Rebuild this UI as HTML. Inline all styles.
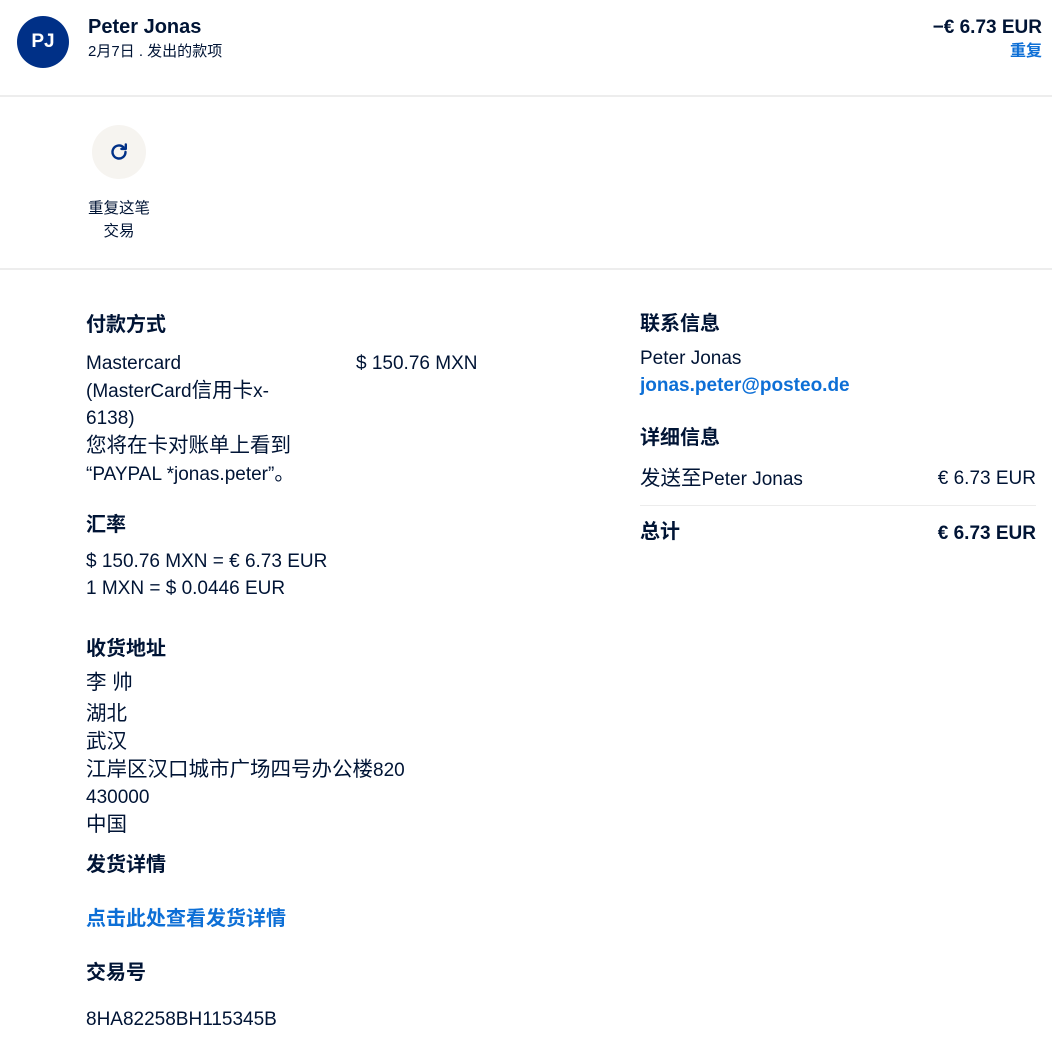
<!DOCTYPE html>
<html><head><meta charset="utf-8">
<style>
*{margin:0;padding:0;box-sizing:border-box}
body{width:1052px;height:1045px;background:#fff;position:relative;overflow:hidden;font-family:"Liberation Sans","Noto Sans CJK SC",sans-serif;color:#001435}
.a{position:absolute;white-space:nowrap;font-size:18px;line-height:27px}
.b{font-weight:bold}
.h{font-size:20px;font-weight:bold}
.c{font-size:20.5px}
.r{text-align:right}
.blue{color:#0d6fd6}
.hr{position:absolute;left:0;width:1052px;height:2px;background:#ededed}
</style></head><body>
<div style="position:absolute;left:17px;top:16px;width:52px;height:52px;border-radius:50%;background:#003087;color:#fff;font-weight:bold;font-size:19px;line-height:52px;text-align:center">PJ</div>
<div class="a b" style="left:88px;top:14px;font-size:20px">Peter Jonas</div>
<div class="a" style="left:88px;top:40px;font-size:15px;line-height:24px">2月7日 . 发出的款项</div>
<div class="a b r" style="right:10px;top:14px;font-size:19px">−€ 6.73 EUR</div>
<div class="a b r blue" style="right:10px;top:40px;font-size:16px;line-height:24px">重复</div>
<div class="hr" style="top:95px"></div>
<div style="position:absolute;left:92px;top:125px;width:54px;height:54px;border-radius:50%;background:#f6f4f0"></div>
<svg style="position:absolute;left:107px;top:140px" width="24" height="24" viewBox="0 0 24 24"><path d="M18.5 12a6.5 6.5 0 1 1-2-4.7" fill="none" stroke="#003087" stroke-width="2.4" stroke-linecap="round"/><path d="M18.8 4.5v4.4h-4.4" fill="none" stroke="#003087" stroke-width="2.4" stroke-linecap="round" stroke-linejoin="round"/></svg>
<div class="a" style="left:69px;width:100px;text-align:center;top:197px;font-size:15.5px;line-height:23px">重复这笔<br>交易</div>
<div class="hr" style="top:268px"></div>

<div class="a h" style="left:86px;top:312px">付款方式</div>
<div class="a" style="left:86px;top:350px;font-size:19px">Mastercard<br>(MasterCard<span class="c">信用卡</span>x-<br>6138)<br><span class="c">您将在卡对账单上看到</span><br>“PAYPAL *jonas.peter”<span class="c">。</span></div>
<div class="a" style="left:356px;top:350px;font-size:19px">$ 150.76 MXN</div>

<div class="a h" style="left:86px;top:512px">汇率</div>
<div class="a" style="left:86px;top:548px;font-size:19px">$ 150.76 MXN = € 6.73 EUR<br>1 MXN = $ 0.0446 EUR</div>

<div class="a h" style="left:86px;top:636px">收货地址</div>
<div class="a" style="left:86px;top:669px;font-size:19px"><span class="c">李 帅</span></div>
<div class="a" style="left:86px;top:700px;font-size:19px"><span class="c">湖北</span><br><span class="c">武汉</span><br><span class="c">江岸区汉口城市广场四号办公楼</span>820<br>430000<br><span class="c">中国</span></div>

<div class="a h" style="left:86px;top:852px">发货详情</div>
<div class="a b blue" style="left:86px;top:906px;font-size:20px">点击此处查看发货详情</div>
<div class="a h" style="left:86px;top:960px">交易号</div>
<div class="a" style="left:86px;top:1006px;font-size:19px">8HA82258BH115345B</div>

<div class="a h" style="left:640px;top:311px">联系信息</div>
<div class="a" style="left:640px;top:345px;font-size:19px">Peter Jonas</div>
<div class="a b blue" style="left:640px;top:372px;font-size:19px">jonas.peter@posteo.de</div>
<div class="a h" style="left:640px;top:425px">详细信息</div>
<div class="a" style="left:640px;top:465px;font-size:19px"><span class="c">发送至</span>Peter Jonas</div>
<div class="a r" style="right:16px;top:465px;font-size:19px">€ 6.73 EUR</div>
<div style="position:absolute;left:640px;top:505px;width:396px;height:1px;background:#ececec"></div>
<div class="a h" style="left:640px;top:519px">总计</div>
<div class="a b r" style="right:16px;top:520px;font-size:19px">€ 6.73 EUR</div>
</body></html>
